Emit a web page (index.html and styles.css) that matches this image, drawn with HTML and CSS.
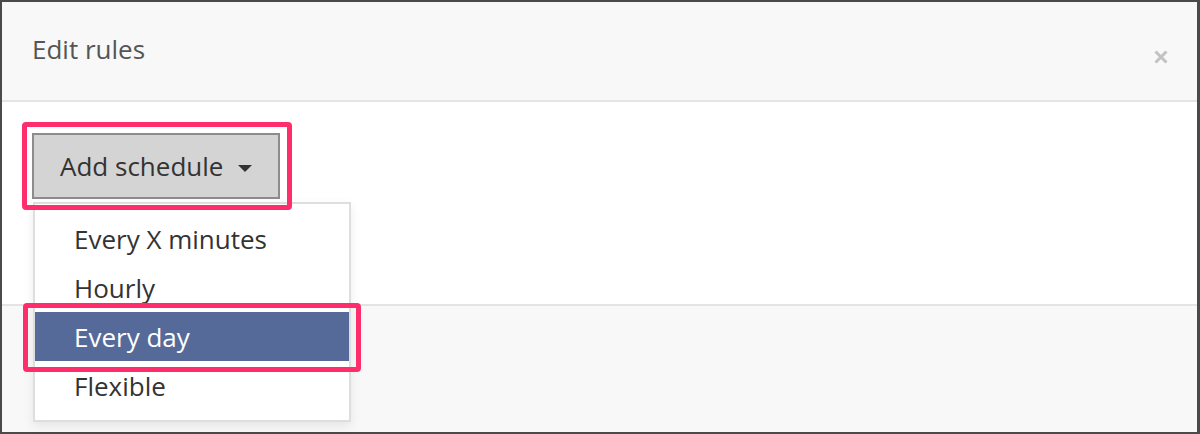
FILE: index.html
```html
<!DOCTYPE html>
<html>
    <head>
        <title>Edit rules</title>
        <link rel="stylesheet" href="styles.css">
    </head>
    <body>
        <div class="modal">
            <div class="modal-header">
                <p class="modal-title">Edit rules</p>
                <button class="close">
                    <svg width="14" height="14" viewBox="0 0 14 14">
                        <path d="M1.5 1.5 L12.5 12.5 M12.5 1.5 L1.5 12.5" stroke="#c2c2c2" stroke-width="3" />
                    </svg>
                </button>
            </div>

            <div class="modal-body">
                <button class="add-schedule">
                    Add schedule
                    <span class="caret"></span>
                </button>
            </div>

            <div class="modal-footer"></div>

            <ul class="menu">
                <li class="menu-item">Every X minutes</li>
                <li class="menu-item">Hourly</li>
                <li class="menu-item selected">Every day</li>
                <li class="menu-item">Flexible</li>
            </ul>

            <!-- annotation boxes -->
            <div class="mark mark-button"></div>
            <div class="mark mark-item"></div>
        </div>
    </body>
</html>
```

FILE: styles.css
```css
body {
    margin: 0;
    font-family: "Open Sans", "Liberation Sans", sans-serif;
}

.modal {
    position: relative;
    width: 1200px;
    height: 434px;
    box-sizing: border-box;
    border: 2px solid #4a4a4a;
    border-right-width: 3px;
    background-color: #f8f8f8;
    display: flex;
    flex-direction: column;
}

.modal-header {
    height: 98px;
    border-bottom: 2px solid #e4e4e4;
    display: flex;
    align-items: center;
    justify-content: space-between;
    padding: 0 31px 0 30px;
}

.modal-title {
    margin: 0;
    margin-top: -5px;
    font-size: 26px;
    color: #555555;
}

.close {
    background: none;
    border: none;
    padding: 0;
    margin-top: 12px;
    margin-right: -2px;
    display: flex;
}

.modal-body {
    height: 171px;
    background-color: white;
    border-bottom: 2px solid #e4e4e4;
    padding: 31px 30px 0;
}

.add-schedule {
    height: 66px;
    width: 248px;
    background-color: #d4d4d4;
    border: 2px solid #8c8c8c;
    padding: 0 26px;
    font-family: "Open Sans", "Liberation Sans", sans-serif;
    font-size: 26px;
    color: #333333;
    display: flex;
    align-items: center;
    justify-content: space-between;
}

.caret {
    width: 0;
    height: 0;
    border-left: 7px solid transparent;
    border-right: 7px solid transparent;
    border-top: 7px solid #333333;
    margin-top: 4px;
}

.modal-footer {
    flex: 1;
}

.menu {
    position: absolute;
    left: 31px;
    top: 200px;
    width: 318px;
    height: 220px;
    box-sizing: border-box;
    margin: 0;
    padding: 10px 0 0;
    list-style: none;
    background-color: white;
    border: 2px solid #dedede;
    box-shadow: 0 4px 10px rgba(0, 0, 0, 0.08);
}

.menu-item {
    height: 49px;
    line-height: 50px;
    padding-left: 39px;
    font-size: 26px;
    color: #333333;
}

.menu-item.selected {
    background-color: #566a9a;
    color: white;
}

.mark {
    position: absolute;
    border: 5px solid #ff2d6b;
    border-radius: 4px;
    box-sizing: border-box;
}

.mark-button {
    left: 20px;
    top: 120px;
    width: 270px;
    height: 88px;
}

.mark-item {
    left: 21px;
    top: 301px;
    width: 338px;
    height: 69px;
}
```
